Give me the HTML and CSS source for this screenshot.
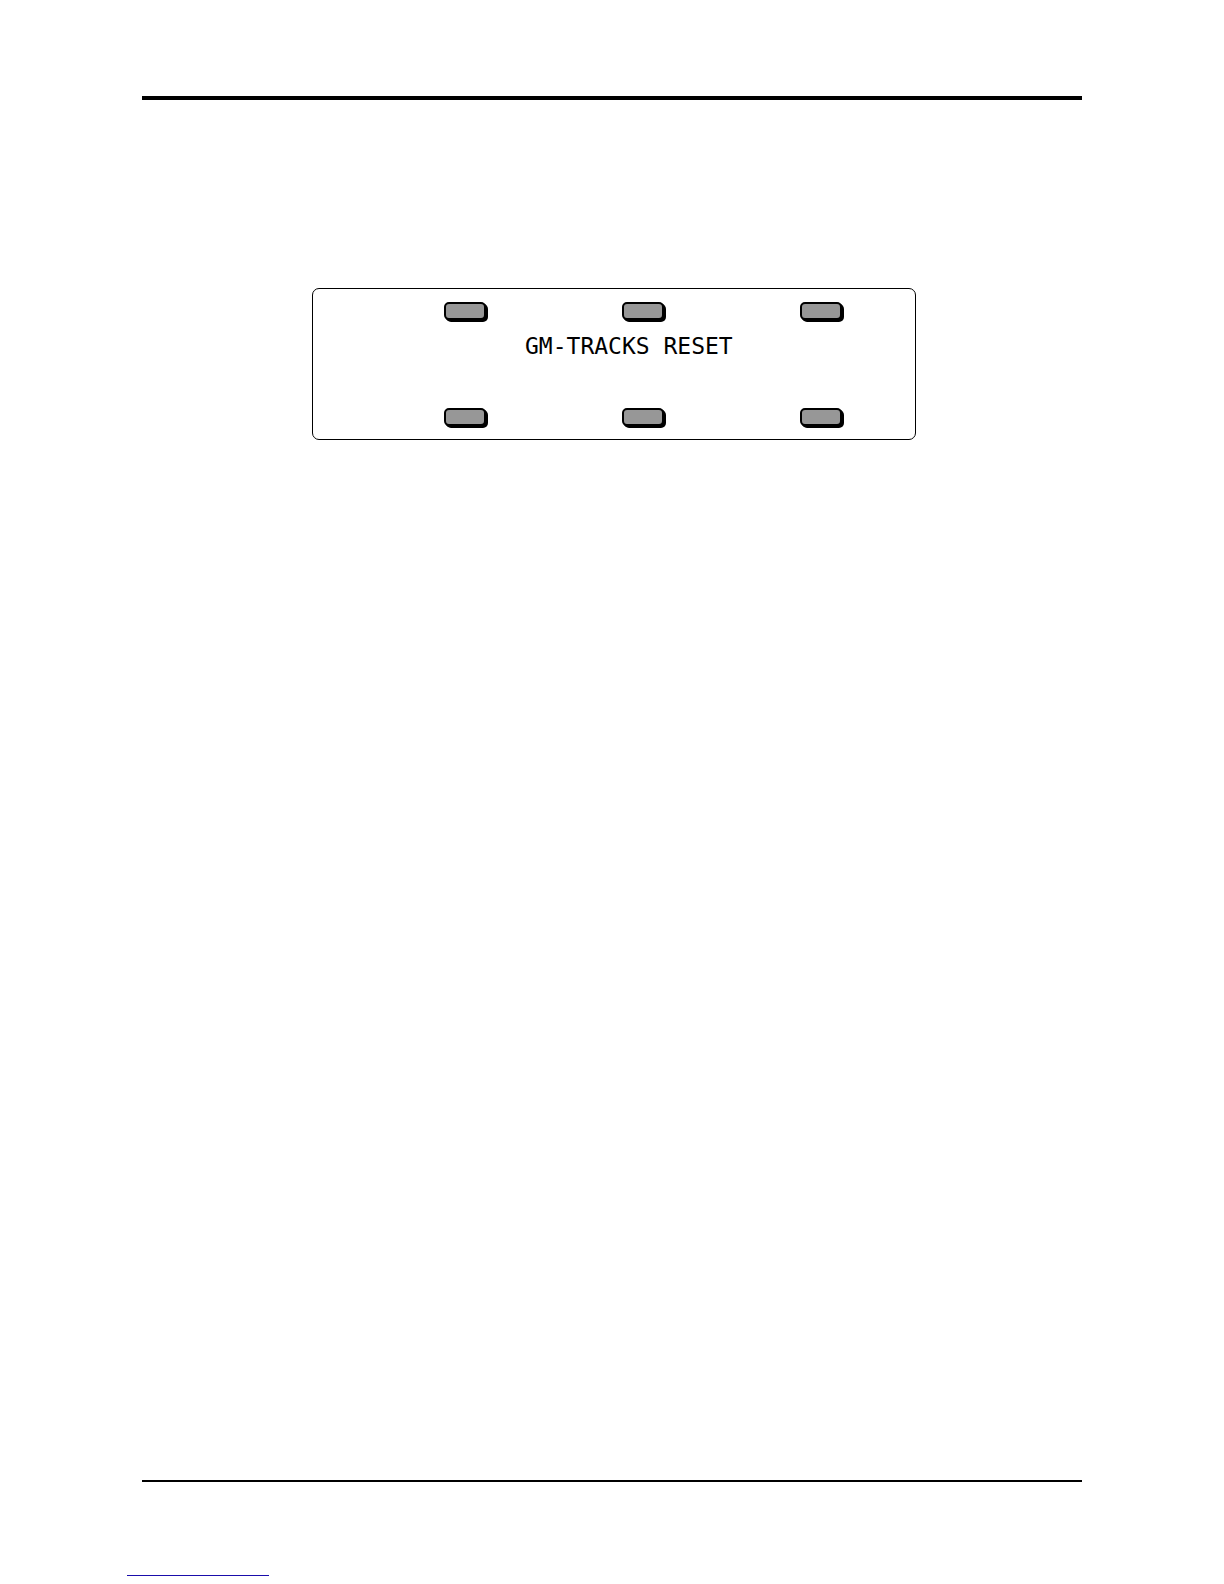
FILE: index.html
```html
<!DOCTYPE html>
<html lang="en">
<head>
    <meta charset="UTF-8">
    <meta name="viewport" content="width=device-width, initial-scale=1.0">
    <title>GM-TRACKS RESET</title>
    <link rel="stylesheet" href="styles.css">
</head>
<body>
    <main class="page">
        <section class="panel">
            <div class="key-row">
                <button type="button" class="key"></button>
                <button type="button" class="key"></button>
                <button type="button" class="key"></button>
            </div>
            <p class="display">GM-TRACKS RESET</p>
            <div class="key-row">
                <button type="button" class="key"></button>
                <button type="button" class="key"></button>
                <button type="button" class="key"></button>
            </div>
        </section>
    </main>

    <footer class="footer">
        <a class="footer-link" href="#"></a>
    </footer>
</body>
</html>
```

FILE: styles.css
```css
* {
    box-sizing: border-box;
}

body {
    display: flex;
    flex-direction: column;
    min-height: 100vh;
    margin: 0;
    padding-top: 96px;
    background: #fff;
    color: #000;
    font-family: "DejaVu Sans Mono", "Liberation Mono", monospace;
}

.page {
    flex: 1;
    margin: 0 142px;
    padding: 188px 166px 0 170px;
    border-top: 4px solid #000;
    border-bottom: 2px solid #000;
}

/* instrument display with its soft keys */
.panel {
    padding: 13px 73px 13px 131px;
    border: 1px solid #000;
    border-radius: 7px;
}

.key-row {
    display: flex;
    justify-content: space-between;
}

.key {
    width: 42px;
    height: 18px;
    padding: 0;
    border: 2px solid #000;
    border-radius: 5px;
    background: #979797;
    box-shadow: 1px 1px 0 #000, 2px 2px 0 #000;
    cursor: pointer;
}

.display {
    height: 88px;
    margin: 0;
    padding: 11px 0 0 81px;
    font-size: 23px;
    line-height: 30px;
    white-space: nowrap;
}

.footer {
    padding: 93px 127px 8px;
}

.footer-link {
    display: block;
    width: 142px;
    border-bottom: 1px solid #1a0dab;
}
```
